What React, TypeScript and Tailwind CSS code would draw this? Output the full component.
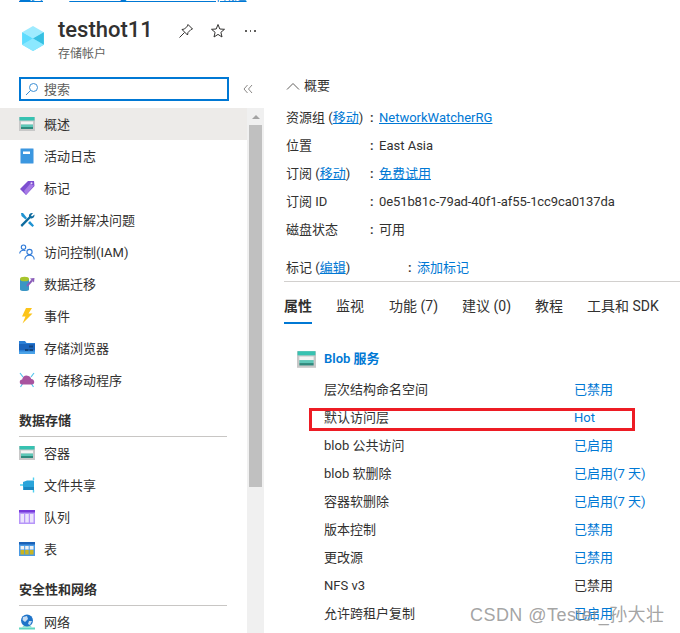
import React from "react";

const BlobIcon = ({ size = 16 }: { size?: number }) => (
  <svg width={size} height={size} viewBox="0 0 16 16">
    <rect x="0" y="1" width="16" height="14" fill="#c8c8c8" />
    <rect x="0.5" y="1" width="15" height="3.5" fill="#37c2b1" />
    <rect x="2" y="5.5" width="12" height="3" fill="#f4f4f4" />
    <rect x="2" y="8.5" width="12" height="2.5" fill="#5ec8b8" />
    <rect x="2" y="11" width="12" height="2" fill="#2e8a7d" />
  </svg>
);

const LogIcon = () => (
  <svg width="16" height="16" viewBox="0 0 16 16">
    <rect x="1.5" y="0.5" width="13" height="15" rx="1" fill="#3b97e0" stroke="#9cc8ee" />
    <rect x="4" y="3.5" width="7" height="2.5" fill="#fff" />
  </svg>
);

const TagIcon = () => (
  <svg width="16" height="16" viewBox="0 0 16 16">
    <path d="M1 9 L9 1 L15 1 L15.5 6 L7 15 Z" fill="#7d4fd0" />
    <path d="M5 11 L11 4 L15 5.5 L7 15 Z" fill="#a77be6" />
    <circle cx="12.5" cy="3.2" r="1" fill="#e6dcf8" />
  </svg>
);

const WrenchIcon = () => (
  <svg width="16" height="16" viewBox="0 0 16 16">
    <path d="M2 1 L4 1 L8 6 L6.5 7.5 L2.5 4 Z" fill="#1f93d2" />
    <path d="M9 11 L11 9 L15 13.5 L13.5 15 Z" fill="#1f93d2" />
    <path d="M1.5 13 L10 4.5 C9.5 2 11.5 0.5 14 1 L12 3.5 L13 4.5 L15.5 2.5 C15.8 5 14 7 11.5 6.2 L3 15 Z" fill="#0f6c9f" />
  </svg>
);

const UsersIcon = () => (
  <svg width="16" height="16" viewBox="0 0 16 16" fill="none" stroke="#2f7ad8" strokeWidth="1.1">
    <circle cx="4.5" cy="3.2" r="2.2" />
    <path d="M0.7 9.5 C1 7 2.5 6.3 4.5 6.3 C5.3 6.3 6 6.5 6.5 6.8" />
    <circle cx="10.5" cy="8" r="2.6" />
    <path d="M5.8 15.5 C6 12.5 8 11.3 10.5 11.3 C13 11.3 15 12.5 15.2 15.5" />
  </svg>
);

const MigrateIcon = () => (
  <svg width="16" height="16" viewBox="0 0 16 16">
    <path d="M1 3 V13.5 C1 15.5 10 15.5 10 13.5 V3 Z" fill="#3a96c4" />
    <ellipse cx="5.5" cy="3" rx="4.5" ry="2.3" fill="#a8c52c" />
    <path d="M8 10 L13 4.5" stroke="#8a5cb8" strokeWidth="2" />
    <path d="M11 2.5 L15.5 2 L15 6.5 Z" fill="#8a5cb8" />
  </svg>
);

const BoltIcon = () => (
  <svg width="16" height="16" viewBox="0 0 16 16">
    <path d="M7 0 L13 0 L9.5 5.5 L13.5 5.5 L3.5 15.5 L6.5 8.5 L3 8.5 Z" fill="#fcc419" />
  </svg>
);

const ExplorerIcon = () => (
  <svg width="16" height="16" viewBox="0 0 16 16">
    <path d="M0 1 H6 L7.5 3 H16 V14 H0 Z" fill="#2a7fd6" />
    <rect x="0" y="4" width="16" height="6" fill="#1b64bc" />
    <rect x="10" y="5.5" width="4" height="2" fill="#12457f" />
    <rect x="6" y="9" width="3.5" height="2" fill="#12457f" />
    <rect x="10.5" y="9" width="3.5" height="2" fill="#12457f" />
    <rect x="0" y="11.5" width="16" height="2.5" fill="#4ba3e8" />
  </svg>
);

const MoverIcon = () => (
  <svg width="16" height="16" viewBox="0 0 16 16">
    <path d="M1 1 L4 5 M15 1 L12 5 M1.5 15 L4 11 M14.5 15 L12 11" stroke="#55c5ec" strokeWidth="1.2" />
    <path d="M3 12.5 C0 12.5 0 7.5 3.2 7.5 C3.8 3.8 7 2.5 9.5 4 C11 4.5 12 5.8 12.2 7 C16 7 16.2 12.5 13 12.5 Z" fill="#a8549f" />
  </svg>
);

const ShareIcon = () => (
  <svg width="16" height="16" viewBox="0 0 16 16">
    <path d="M1 8 L5 8 M14.5 0.5 V3 M14.5 13 V15.5" stroke="#4fd0f0" strokeWidth="1.4" />
    <path d="M4 5 L8 3.5 L15 3.5 V13 H4 Z" fill="#2aa4da" />
    <rect x="5" y="10" width="10" height="3" fill="#1a86c0" />
  </svg>
);

const QueueIcon = () => (
  <svg width="16" height="16" viewBox="0 0 16 16">
    <rect x="0" y="1" width="16" height="14" fill="#b796f9" />
    <rect x="0" y="1" width="16" height="2.5" fill="#773adc" />
    <rect x="1.5" y="5" width="3.5" height="8.5" fill="#ece4fc" />
    <rect x="6.25" y="5" width="3.5" height="8.5" fill="#ece4fc" />
    <rect x="11" y="5" width="3.5" height="8.5" fill="#ece4fc" />
  </svg>
);

const TableIcon = () => (
  <svg width="16" height="16" viewBox="0 0 16 16">
    <rect x="0" y="1" width="16" height="14" fill="#4a9ae4" />
    <rect x="0" y="1" width="16" height="2.5" fill="#1a62b8" />
    <rect x="1.5" y="5" width="13" height="3.5" fill="#f2f2f2" />
    <rect x="1.5" y="9" width="13" height="4.5" fill="#c9b520" />
    <path d="M5.7 5 V13.5 M10.2 5 V13.5" stroke="#4a9ae4" />
  </svg>
);

const GlobeIcon = () => (
  <svg width="16" height="16" viewBox="0 0 16 16">
    <rect x="0" y="13.5" width="16" height="2" fill="#5fd6c0" />
    <path d="M3 13.5 L13 13.5 L11 11 L5 11 Z" fill="#8fe0d0" />
    <circle cx="8" cy="6.5" r="6" fill="#1f74c9" />
    <path d="M4 3 L8 2 L9 5 L6 8 L3.5 6 Z M10 7 L13 7 L11 11 L9 10 Z" fill="#c6dcf2" />
  </svg>
);

const menuGroups = [
  {
    title: "",
    items: [
      { label: "概述", icon: <BlobIcon />, active: true },
      { label: "活动日志", icon: <LogIcon /> },
      { label: "标记", icon: <TagIcon /> },
      { label: "诊断并解决问题", icon: <WrenchIcon /> },
      { label: "访问控制(IAM)", icon: <UsersIcon /> },
      { label: "数据迁移", icon: <MigrateIcon /> },
      { label: "事件", icon: <BoltIcon /> },
      { label: "存储浏览器", icon: <ExplorerIcon /> },
      { label: "存储移动程序", icon: <MoverIcon /> },
    ],
  },
  {
    title: "数据存储",
    items: [
      { label: "容器", icon: <BlobIcon /> },
      { label: "文件共享", icon: <ShareIcon /> },
      { label: "队列", icon: <QueueIcon /> },
      { label: "表", icon: <TableIcon /> },
    ],
  },
  {
    title: "安全性和网络",
    items: [{ label: "网络", icon: <GlobeIcon /> }],
  },
];

const blobRows = [
  { label: "层次结构命名空间", value: "已禁用" },
  { label: "默认访问层", value: "Hot" },
  { label: "blob 公共访问", value: "已启用" },
  { label: "blob 软删除", value: "已启用(7 天)" },
  { label: "容器软删除", value: "已启用(7 天)" },
  { label: "版本控制", value: "已禁用" },
  { label: "更改源", value: "已禁用" },
  { label: "NFS v3", value: "已禁用", plain: true },
  { label: "允许跨租户复制", value: "已启用" },
];

const tabs = ["属性", "监视", "功能 (7)", "建议 (0)", "教程", "工具和 SDK"];

const Link = ({ children }: { children: React.ReactNode }) => (
  <span className="text-[#0078d4] underline">{children}</span>
);

const Essential = ({ label, children }: { label: React.ReactNode; children: React.ReactNode }) => (
  <div className="flex h-7 items-center">
    <div className="w-[84px] shrink-0 whitespace-nowrap">{label}</div>
    <div className="w-[9px] shrink-0 font-semibold">:</div>
    <div className="whitespace-nowrap">{children}</div>
  </div>
);

export default function App() {
  return (
    <div className="relative h-[633px] w-[680px] overflow-hidden bg-white font-['Roboto','Noto_Sans_CJK_SC',sans-serif] text-[13px] text-[#323130]">
      {/* breadcrumb, cut off by the top of the picture */}
      <div className="flex h-[4px] items-end gap-[10px] overflow-hidden whitespace-nowrap pl-[19px] text-[12px] leading-4 text-[#0078d4]">
        <span className="underline">主页</span>
        <span className="text-[#605e5c]">&gt;</span>
        <span className="underline">testhot11_1658156417774 | 概述</span>
        <span className="text-[#605e5c]">&gt;</span>
      </div>

      {/* title */}
      <div className="flex h-[66px] pl-[21px] pt-[21px]">
        <svg width="24" height="27" viewBox="0 0 26 30" className="shrink-0">
          <path d="M13 1 L25 8 L13 15 L1 8 Z" fill="#9eebff" />
          <path d="M1 8 L13 15 L13 29 L1 22 Z" fill="#7fe6ff" />
          <path d="M25 8 L13 15 L13 29 L25 22 Z" fill="#5cdcfb" />
          <path d="M25 8 L13 15 L25 22 Z" fill="#37c0e2" />
          <path d="M1 8 L13 15 L1 22 Z" fill="#5ddcff" />
          <path d="M13 15 L1 22 L13 29 L25 22 Z" fill="#8be8ff" />
        </svg>
        <div className="ml-[13px] w-[116px] shrink-0">
          <div className="mt-[-7px] whitespace-nowrap text-[22px] font-medium leading-[24px] text-[#323130]">testhot11</div>
          <div className="mt-[4px] text-[12px] leading-4 text-[#605e5c]">存储帐户</div>
        </div>
        <div className="mt-[-3px] flex h-[18px] items-center">
          <svg width="16" height="16" viewBox="0 0 16 16" fill="none" stroke="#323130" className="ml-[4px]">
            <path d="M10 1.5 L14.5 6 L13 6.5 L10 9.5 L9.5 12 L4 6.5 L6.5 6 L9.5 3 Z M6.5 9.5 L1.5 14.5" />
          </svg>
          <svg width="16" height="16" viewBox="0 0 16 16" fill="none" stroke="#323130" className="ml-[16px]">
            <path d="M8 1.5 L9.8 6 L14.5 6.3 L10.9 9.3 L12 14 L8 11.4 L4 14 L5.1 9.3 L1.5 6.3 L6.2 6 Z" />
          </svg>
          <span className="ml-[19px] flex gap-[3px]">
            <i className="h-[1.5px] w-[1.5px] bg-[#605e5c]" />
            <i className="h-[1.5px] w-[1.5px] bg-[#605e5c]" />
            <i className="h-[1.5px] w-[1.5px] bg-[#605e5c]" />
          </span>
        </div>
      </div>

      <div className="flex">
        {/* left menu */}
        <div className="w-[264px] shrink-0">
          <div className="flex h-[38px] pl-[19px] pt-[7px]">
            <div className="flex h-[24px] w-[210px] items-center border-2 border-[#0078d4] pl-[4px] text-[#605e5c]">
              <svg width="14" height="14" viewBox="0 0 14 14" fill="none" stroke="#3b8ed4" strokeWidth="1">
                <circle cx="8.5" cy="5.5" r="4" />
                <path d="M5.5 8.5 L1 13" />
              </svg>
              <span className="ml-[5px] mt-[1px]">搜索</span>
            </div>
            <svg width="10" height="10" viewBox="0 0 10 10" fill="none" stroke="#8a8886" className="ml-[14px] mt-[7px]">
              <path d="M4.5 1 L1 5 L4.5 9 M9 1 L5.5 5 L9 9" />
            </svg>
          </div>
          <div className="flex">
            <div className="w-[247px] shrink-0">
              {menuGroups.map((group) => (
                <div key={group.title}>
                  {group.title && (
                    <div className="ml-[19px] mr-[20px] mt-[12px] h-[29px] border-b border-[#c8c6c4] pt-[3px] font-semibold leading-5 text-[#323130]">
                      {group.title}
                    </div>
                  )}
                  {group.items.map((item) => (
                    <div
                      key={item.label}
                      className={`flex h-8 items-center pl-[19px] ${"active" in item && item.active ? "bg-[#edebe9]" : ""}`}
                    >
                      <span className="flex h-4 w-4 shrink-0">{item.icon}</span>
                      <span className="ml-[9px] mt-[1px] whitespace-nowrap">{item.label}</span>
                    </div>
                  ))}
                </div>
              ))}
            </div>
            <div className="flex h-[525px] w-[17px] shrink-0 flex-col items-center bg-[#f0f0f0]">
              <div className="flex h-[17px] items-center">
                <div className="h-0 w-0 border-x-[4px] border-b-[4px] border-x-transparent border-b-[#a3a3a3]" />
              </div>
              <div className="h-[362px] w-[13px] bg-[#c0c0c0]" />
            </div>
          </div>
        </div>

        {/* main content */}
        <div className="min-w-0 flex-1 pl-[20px]">
          <div className="flex h-[34px] items-center pl-[2px] pb-[3px]">
            <svg width="14" height="8" viewBox="0 0 14 8" fill="none" stroke="#605e5c">
              <path d="M1 7.5 L7 1.5 L13 7.5" />
            </svg>
            <span className="ml-[4px]">概要</span>
          </div>
          <div className="pl-[2px] leading-7">
            <Essential label={<>资源组 (<Link>移动</Link>)</>}>
              <Link>NetworkWatcherRG</Link>
            </Essential>
            <Essential label="位置">East Asia</Essential>
            <Essential label={<>订阅 (<Link>移动</Link>)</>}>
              <Link>免费试用</Link>
            </Essential>
            <Essential label="订阅 ID">
              <span className="tracking-[-0.1px]">0e51b81c-79ad-40f1-af55-1cc9ca0137da</span>
            </Essential>
            <Essential label="磁盘状态">可用</Essential>
          </div>
          <div className="flex h-[38px] items-center border-b border-[#d2d0ce] pl-[2px] pt-[12px] pb-[1px]">
            <div className="w-[122px] shrink-0">
              标记 (<Link>编辑</Link>)
            </div>
            <div className="w-[9px] shrink-0 font-semibold">:</div>
            <span className="text-[#0078d4]">添加标记</span>
          </div>

          <div className="flex h-[42px] gap-[24px] text-[14px]">
            {tabs.map((tab, i) => (
              <div
                key={tab}
                className={`h-[42px] whitespace-nowrap pt-[14px] leading-5 ${i === 0 ? "border-b-2 border-[#0078d4] font-semibold" : ""} ${i === 2 ? "ml-[1px]" : ""}`}
              >
                {tab}
              </div>
            ))}
          </div>

          <div className="mt-[26px] flex h-[18px] items-center pl-[13px] font-semibold text-[#0078d4]">
            <BlobIcon size={19} />
            <span className="ml-[8px]">Blob 服务</span>
          </div>
          <div className="relative mt-[8px]">
            {blobRows.map((row) => (
              <div key={row.label} className="flex h-7 items-center whitespace-nowrap pl-[40px]">
                <div className="w-[250px] shrink-0">{row.label}</div>
                <div className={row.plain ? "text-[#323130]" : "text-[#0078d4]"}>{row.value}</div>
              </div>
            ))}
            {/* red annotation */}
            <div className="absolute left-[25px] top-[32px] h-[23px] w-[326px] border-[3px] border-[#ed1c24]" />
          </div>
        </div>
      </div>

      {/* watermark */}
      <div className="absolute left-[470px] top-[603px] whitespace-nowrap font-['Liberation_Sans','Noto_Sans_CJK_SC',sans-serif] text-[18px] leading-6 tracking-[0.45px] text-[#8c8c8c]/80">
        CSDN @Tester_孙大壮
      </div>
    </div>
  );
}
